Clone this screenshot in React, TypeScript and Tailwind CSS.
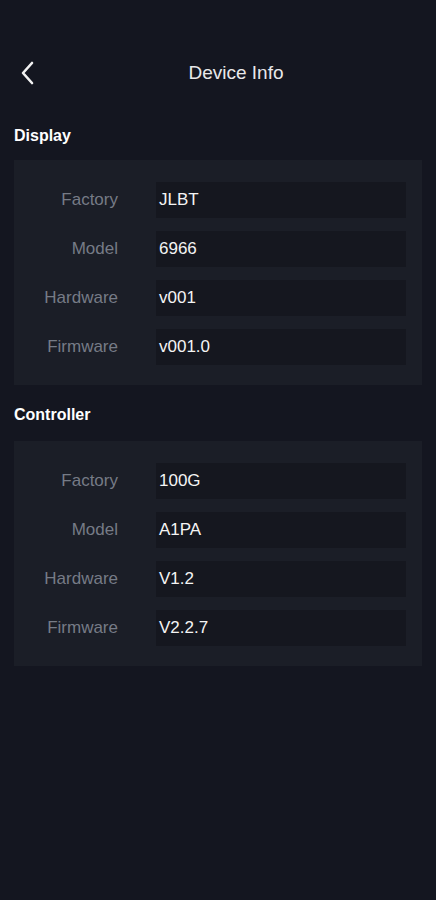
import React from "react";

interface Row {
  label: string;
  value: string;
}

const sections: { title: string; rows: Row[] }[] = [
  {
    title: "Display",
    rows: [
      { label: "Factory", value: "JLBT" },
      { label: "Model", value: "6966" },
      { label: "Hardware", value: "v001" },
      { label: "Firmware", value: "v001.0" },
    ],
  },
  {
    title: "Controller",
    rows: [
      { label: "Factory", value: "100G" },
      { label: "Model", value: "A1PA" },
      { label: "Hardware", value: "V1.2" },
      { label: "Firmware", value: "V2.2.7" },
    ],
  },
];

export default function App() {
  return (
    <div className="w-[436px] h-[900px] bg-[#141620] font-['Liberation_Sans',Arial,sans-serif] overflow-hidden">
      {/* Header */}
      <div className="flex items-center h-[46px] mt-[50px]">
        <div className="w-[36px] flex justify-end">
          <svg width="14" height="24" viewBox="0 0 14 24" className="mr-[1px]">
            <polyline
              points="11,2 2,12 11,22"
              fill="none"
              stroke="#f2f2f2"
              strokeWidth="2.6"
              strokeLinecap="round"
              strokeLinejoin="round"
            />
          </svg>
        </div>
        <h1 className="flex-1 text-center text-[19px] text-[#e8e8ea]">Device Info</h1>
      </div>

      {sections.map((section, i) => (
        <section key={section.title} className={i === 0 ? "mt-[30px]" : "mt-[20px]"}>
          <h2
            className={`px-[14px] text-[16px] leading-[20px] font-bold text-white ${
              i === 0 ? "mb-[14px]" : "mb-[16px]"
            }`}
          >
            {section.title}
          </h2>
          <div className="mx-[14px] bg-[#1b1e27] pt-[22px] pb-[20px] flex flex-col gap-[13px]">
            {section.rows.map((row) => (
              <div key={row.label} className="flex items-center h-[36px]">
                <span className="w-[104px] text-right text-[17px] text-[#767b86]">{row.label}</span>
                <div className="ml-[38px] w-[250px] h-full bg-[#15171f] flex items-center pl-[3px] text-[17px] text-[#f4f4f4]">
                  {row.value}
                </div>
              </div>
            ))}
          </div>
        </section>
      ))}
    </div>
  );
}
